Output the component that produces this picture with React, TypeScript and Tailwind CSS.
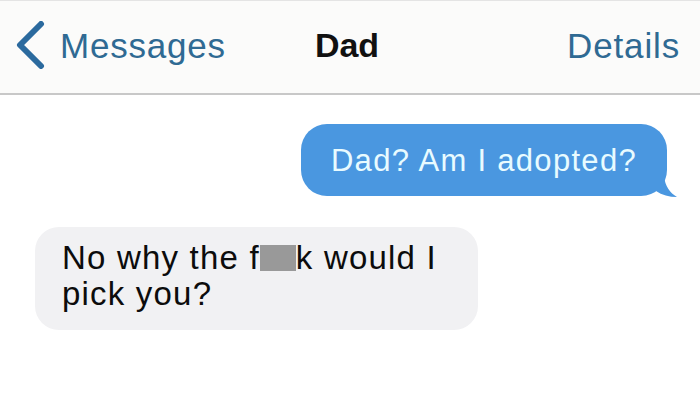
import React from 'react';

function BackChevron() {
  return (
    <svg width="32" height="48" viewBox="0 0 32 48" className="shrink-0">
      <polyline points="27,3 6,24 27,45" fill="none" stroke="#2b6a9e" strokeWidth="6" strokeLinecap="round" strokeLinejoin="round" />
    </svg>
  );
}

export default function App() {
  return (
    <div className="w-[700px] h-[401px] overflow-hidden bg-white font-['Liberation_Sans',Arial,sans-serif]">
      <header className="h-[95px] bg-[#fbfbfa] border-t border-[#e4e4e4] border-b-2 border-b-[#c8c8c8] grid grid-cols-3 items-center pb-[4px] pl-[14px] pr-[20px]">
        <div className="flex items-center gap-[14px]">
          <BackChevron />
          <span className="text-[35px] leading-none tracking-[0.8px] text-[#2f6a93]">Messages</span>
        </div>
        <div className="text-center text-[34px] leading-none font-bold text-[#111]">Dad</div>
        <div className="text-right text-[35px] leading-none tracking-[0.85px] text-[#2f6a93]">Details</div>
      </header>

      <main className="flex flex-col pt-[29px]">
        <div className="self-end mr-[33px] relative">
          <div className="h-[72px] px-[30px] rounded-[26px] bg-[#4a97e0] flex items-center">
            <span className="text-[31px] leading-none tracking-[1.3px] text-[#e8fbff]">Dad? Am I adopted?</span>
          </div>
          <svg width="22" height="22" viewBox="0 0 22 22" className="absolute right-[-11px] bottom-[-2px]">
            <path d="M0,0 L8,0 C9,10 14,17 21,21 C13,21 6,19 0,15 Z" fill="#4a97e0" />
          </svg>
        </div>

        <div className="self-start ml-[35px] mt-[31px] w-[443px] h-[103px] rounded-[24px] bg-[#f1f1f3] pl-[27px] pt-[13px]">
          <p className="text-[33px] leading-[36px] tracking-[1.2px] text-[#0c0c0c]">
            No why the f<span className="inline-block w-[36px] h-[26px] bg-[#999999] align-[-2px]"></span>k would I
            <br />
            pick you?
          </p>
        </div>
      </main>
    </div>
  );
}
